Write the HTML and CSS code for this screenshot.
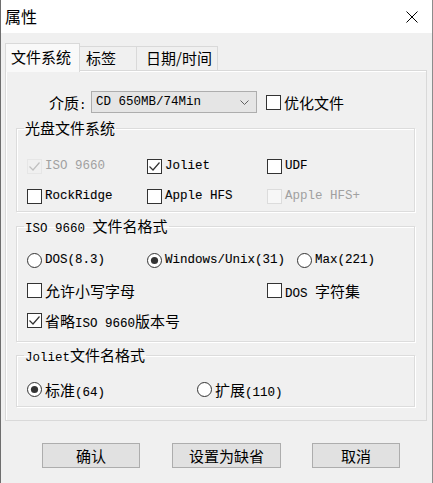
FILE: index.html
```html
<!DOCTYPE html>
<html lang="zh-CN">
<head>
<meta charset="utf-8">
<title>属性</title>
<link rel="stylesheet" href="styles.css">
</head>
<body>
<div class="win">
  <div class="titlebar">
    <span class="title">属性</span>
    <svg class="close" width="12" height="12" viewBox="0 0 12 12"><path d="M0.5 0.5L11.5 11.5M11.5 0.5L0.5 11.5" stroke="#000" stroke-width="1" fill="none"/></svg>
  </div>
  <div class="content">
    <div class="tabs">
      <div class="tab active t1">文件系统</div>
      <div class="tab t2">标签</div>
      <div class="tab t3">日期/时间</div>
    </div>
    <div class="panel">
      <div class="media-row">
        <span class="label">介质<span class="m">:</span></span>
        <div class="select"><span class="m">CD 650MB/74Min</span>
          <svg class="chev" width="9" height="5" viewBox="0 0 9 5"><path d="M0.5 0.5L4.5 4.5L8.5 0.5" stroke="#606060" fill="none"/></svg>
        </div>
        <label class="opt"><svg class="box" width="15" height="15" viewBox="0 0 15 15"><rect x="0.5" y="0.5" width="14" height="14" fill="#fff" stroke="#333"/></svg><span>优化文件</span></label>
      </div>

      <fieldset class="grp g1">
        <legend>光盘文件系统</legend>
        <div class="row">
          <label class="opt c1 disabled"><svg class="box" width="15" height="15" viewBox="0 0 15 15"><rect x="0.5" y="0.5" width="14" height="14" fill="#f0f0f0" stroke="#e6e6e6"/><path d="M2.5 7.5L6 11L12.5 3.5" stroke="#c0c0c0" stroke-width="1.2" fill="none"/></svg><span class="m">ISO 9660</span></label>
          <label class="opt c2"><svg class="box" width="15" height="15" viewBox="0 0 15 15"><rect x="0.5" y="0.5" width="14" height="14" fill="#fff" stroke="#333"/><path d="M2.5 7.5L6 11L12.5 3.5" stroke="#333" stroke-width="1.2" fill="none"/></svg><span class="m b">Joliet</span></label>
          <label class="opt"><svg class="box" width="15" height="15" viewBox="0 0 15 15"><rect x="0.5" y="0.5" width="14" height="14" fill="#fff" stroke="#333"/></svg><span class="m b">UDF</span></label>
        </div>
        <div class="row">
          <label class="opt c1"><svg class="box" width="15" height="15" viewBox="0 0 15 15"><rect x="0.5" y="0.5" width="14" height="14" fill="#fff" stroke="#333"/></svg><span class="m b">RockRidge</span></label>
          <label class="opt c2"><svg class="box" width="15" height="15" viewBox="0 0 15 15"><rect x="0.5" y="0.5" width="14" height="14" fill="#fff" stroke="#333"/></svg><span class="m b">Apple HFS</span></label>
          <label class="opt disabled"><svg class="box" width="15" height="15" viewBox="0 0 15 15"><rect x="0.5" y="0.5" width="14" height="14" fill="#f7f7f7" stroke="#dcdcdc"/></svg><span class="m">Apple HFS+</span></label>
        </div>
      </fieldset>

      <fieldset class="grp g2">
        <legend><span class="m">ISO 9660 </span>文件名格式</legend>
        <div class="row">
          <label class="opt c1"><svg class="box" width="15" height="15" viewBox="0 0 15 15"><circle cx="7.5" cy="7.5" r="7" fill="#fff" stroke="#333"/></svg><span class="m b">DOS(8.3)</span></label>
          <label class="opt c3"><svg class="box" width="15" height="15" viewBox="0 0 15 15"><circle cx="7.5" cy="7.5" r="7" fill="#fff" stroke="#333"/><circle cx="7.5" cy="7.5" r="3.6" fill="#333"/></svg><span class="m b">Windows/Unix(31)</span></label>
          <label class="opt"><svg class="box" width="15" height="15" viewBox="0 0 15 15"><circle cx="7.5" cy="7.5" r="7" fill="#fff" stroke="#333"/></svg><span class="m b">Max(221)</span></label>
        </div>
        <div class="row">
          <label class="opt c4"><svg class="box" width="15" height="15" viewBox="0 0 15 15"><rect x="0.5" y="0.5" width="14" height="14" fill="#fff" stroke="#333"/></svg><span>允许小写字母</span></label>
          <label class="opt"><svg class="box" width="15" height="15" viewBox="0 0 15 15"><rect x="0.5" y="0.5" width="14" height="14" fill="#fff" stroke="#333"/></svg><span><span class="m b">DOS </span>字符集</span></label>
        </div>
        <div class="row">
          <label class="opt"><svg class="box" width="15" height="15" viewBox="0 0 15 15"><rect x="0.5" y="0.5" width="14" height="14" fill="#fff" stroke="#333"/><path d="M2.5 7.5L6 11L12.5 3.5" stroke="#333" stroke-width="1.2" fill="none"/></svg><span>省略<span class="m b">ISO 9660</span>版本号</span></label>
        </div>
      </fieldset>

      <fieldset class="grp g3">
        <legend><span class="m">Joliet</span>文件名格式</legend>
        <div class="row">
          <label class="opt c5"><svg class="box" width="15" height="15" viewBox="0 0 15 15"><circle cx="7.5" cy="7.5" r="7" fill="#fff" stroke="#333"/><circle cx="7.5" cy="7.5" r="3.6" fill="#333"/></svg><span>标准<span class="m b">(64)</span></span></label>
          <label class="opt"><svg class="box" width="15" height="15" viewBox="0 0 15 15"><circle cx="7.5" cy="7.5" r="7" fill="#fff" stroke="#333"/></svg><span>扩展<span class="m b">(110)</span></span></label>
        </div>
      </fieldset>
    </div>
    <div class="buttons">
      <button class="btn b1">确认</button>
      <button class="btn b2">设置为缺省</button>
      <button class="btn b3">取消</button>
    </div>
  </div>
</div>
</body>
</html>
```

FILE: styles.css
```css
* { box-sizing: border-box; }
html, body { margin: 0; padding: 0; }
body {
  width: 433px;
  height: 483px;
  overflow: hidden;
  background: #f0f0f0;
  font-family: "Noto Sans CJK SC", "Microsoft YaHei", sans-serif;
  font-size: 15px;
  color: #000;
}
.win {
  width: 433px;
  height: 483px;
  border-left: 1px solid #6e6e6e;
  border-right: 1px solid #8c8c8c;
  background: #f0f0f0;
  display: flex;
  flex-direction: column;
}
.titlebar {
  height: 33px;
  flex: none;
  background: #fff;
  display: flex;
  align-items: center;
  justify-content: space-between;
  padding: 0 14px 0 4px;
}
.title { font-size: 16px; line-height: 20px; margin-top: -1px; }
.close { display: block; }
.content { padding: 10px 5px 0 4px; }
.tabs {
  display: flex;
  align-items: flex-end;
  height: 27px;
  position: relative;
  z-index: 1;
}
.tab {
  height: 24px;
  border: 1px solid #d9d9d9;
  border-bottom: none;
  border-left: none;
  background: #f0f0f0;
  line-height: 22px;
  padding-left: 6px;
  white-space: nowrap;
}
.tab.active {
  height: 29px;
  margin-bottom: -2px;
  border-left: 1px solid #d9d9d9;
  background: #f9f9f9;
  padding-left: 5px;
  line-height: 26px;
}
.t1 { width: 75px; }
.t2 { width: 57px; }
.t3 { width: 81px; padding-left: 9px; }
.panel {
  height: 351px;
  border: 1px solid #d9d9d9;
  box-shadow: inset 1px 1px 0 #fff;
  background: #f0f0f0;
  padding: 20px 11px 0 10px;
}
.m {
  font-family: "Liberation Mono", "Courier New", monospace;
  font-size: 12.5px;
}
.b { -webkit-text-stroke: 0.1px #000; }
.media-row {
  display: flex;
  align-items: center;
  height: 22px;
}
.label { margin-left: 33px; width: 42px; white-space: nowrap; }
.select {
  width: 166px;
  height: 22px;
  border: 1px solid #adadad;
  background: #e5e5e5;
  display: flex;
  align-items: center;
  justify-content: space-between;
  padding: 0 7px 0 4px;
  margin-right: 9px;
}
.chev { display: block; }
.opt {
  display: flex;
  align-items: center;
  height: 22px;
  white-space: nowrap;
}
.opt .box { display: block; flex: none; margin-right: 3px; }
.opt.disabled { color: #a0a0a0; }
.grp {
  margin: 6px 0 0 0;
  border: 1px solid #dcdcdc;
  box-shadow: 1px 1px 0 #fff, inset 1px 1px 0 #fff;
  padding: 0 0 4px 0;
  min-width: 0;
}
.grp legend {
  padding: 0 1px;
  margin-left: 7px;
  line-height: 18px;
  height: 18px;
}
.row { display: flex; height: 22px; margin-left: 10px; }
.g1 .row:first-of-type { margin-top: 18px; }
.g1 .row + .row { margin-top: 8px; }
.g2 { margin-top: 5px; padding-bottom: 10px; }
.g2 .row:first-of-type { margin-top: 14px; }
.g2 .row + .row { margin-top: 8px; }
.g3 { margin-top: 4px; padding-bottom: 6px; }
.g3 .row { margin-top: 14px; }
.c1 { width: 120px; }
.c2 { width: 120px; }
.c3 { width: 150px; }
.c4 { width: 240px; }
.c5 { width: 170px; }
.buttons {
  display: flex;
  padding-top: 22px;
}
.btn {
  height: 25px;
  border: 1px solid #adadad;
  background: #e1e1e1;
  font-family: inherit;
  font-size: 15px;
  color: #000;
  padding: 0;
  line-height: 22px;
}
.b1 { width: 98px; margin-left: 37px; }
.b2 { width: 109px; margin-left: 32px; }
.b3 { width: 88px; margin-left: 31px; }
```
